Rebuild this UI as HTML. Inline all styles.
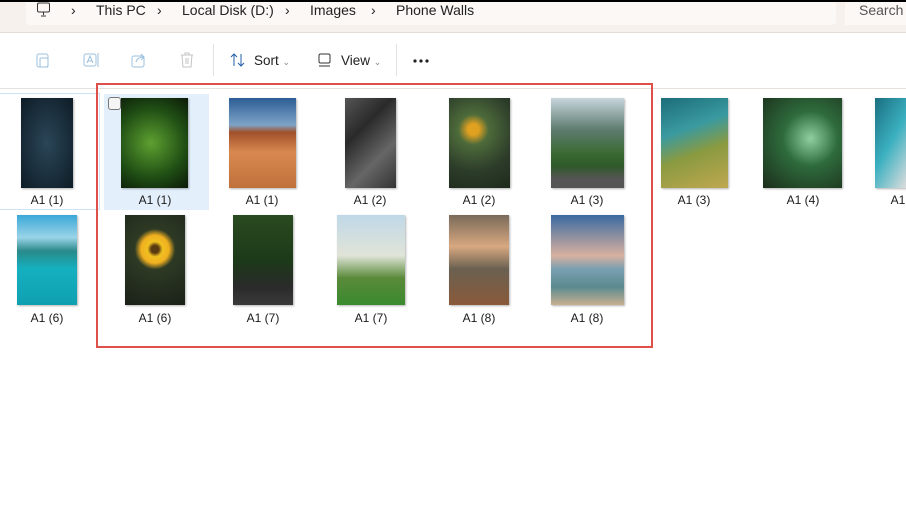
<!DOCTYPE html>
<html><head><style>
*{margin:0;padding:0;box-sizing:border-box}
body{width:906px;height:510px;overflow:hidden;background:#fff;font-family:"Liberation Sans",sans-serif;position:relative;color:#1a1a1a}
.a{position:absolute}
.t{position:absolute;box-shadow:1px 1px 2px rgba(0,0,0,.3)}
.l{position:absolute;font-size:12px;text-align:center;width:80px}
.tb{position:absolute;font-size:13px;color:#222}
</style></head><body>
<div class="a" style="left:0;top:0;width:906px;height:2px;background:#000"></div>
<div class="a" style="left:0;top:2px;width:906px;height:30px;background:#f6f1ec"></div>
<div class="a" style="left:26px;top:2px;width:810px;height:23px;background:#fbf8f5;border-radius:0 0 4px 4px"></div>
<div class="a" style="left:845px;top:2px;width:61px;height:23px;background:#fbf8f5"></div>
<div class="a" style="left:0;top:32px;width:906px;height:1px;background:#e4ddd6"></div>
<svg class="a" style="left:36px;top:2px" width="16" height="16"><rect x="1.5" y="1" width="12" height="9" rx="1.5" fill="none" stroke="#333"/><path d="M5 14h5M7.5 10v3" stroke="#333"/></svg>
<div class="tb" style="left:71px;top:2px;font-size:14px">›</div>
<div class="tb" style="left:96px;top:2px;font-size:14px">This PC</div>
<div class="tb" style="left:157px;top:2px;font-size:14px">›</div>
<div class="tb" style="left:182px;top:2px;font-size:14px">Local Disk (D:)</div>
<div class="tb" style="left:285px;top:2px;font-size:14px">›</div>
<div class="tb" style="left:310px;top:2px;font-size:14px">Images</div>
<div class="tb" style="left:371px;top:2px;font-size:14px">›</div>
<div class="tb" style="left:396px;top:2px;font-size:14px">Phone Walls</div>
<div class="tb" style="left:859px;top:2px;font-size:14px;color:#555">Search</div>
<svg class="a" style="left:34px;top:51px" width="18" height="18" stroke="#9cc0de" fill="none"><rect x="3" y="3" width="11" height="13" rx="2"/><rect x="6" y="7" width="8" height="9" rx="1"/></svg>
<svg class="a" style="left:82px;top:51px" width="18" height="18" stroke="#9cc0de" fill="none"><rect x="2" y="3" width="12" height="12" rx="2"/><path d="M5 12l3-7 3 7M6 10h4M16 2v14"/></svg>
<svg class="a" style="left:130px;top:51px" width="18" height="18" stroke="#9cc0de" fill="none"><rect x="2" y="5" width="12" height="11" rx="2"/><path d="M6 11c1-4 4-5 8-5M11 3l3 3-3 3"/></svg>
<svg class="a" style="left:178px;top:51px" width="18" height="18" stroke="#c4c4c4" fill="none"><path d="M3 4h12M7 4V2h4v2M4 4l1 12h8l1-12M8 7v6M10 7v6"/></svg>
<div class="a" style="left:213px;top:44px;width:1px;height:32px;background:#e2e2e2"></div>
<svg class="a" style="left:229px;top:51px" width="18" height="18" stroke="#1f5fa8" fill="none"><path d="M5 15V3M2 6l3-3 3 3M12 3v12M9 12l3 3 3-3"/></svg>
<div class="tb" style="left:254px;top:53px;font-size:13.5px">Sort <span style="font-size:9px;color:#888">⌄</span></div>
<svg class="a" style="left:317px;top:52px" width="16" height="16" stroke="#333" fill="none"><rect x="2" y="2" width="11" height="9" rx="1.5"/><path d="M2 14h11"/></svg>
<div class="tb" style="left:341px;top:53px;font-size:13.5px">View <span style="font-size:9px;color:#888">⌄</span></div>
<div class="a" style="left:396px;top:44px;width:1px;height:32px;background:#e2e2e2"></div>
<svg class="a" style="left:412px;top:58px" width="20" height="6" fill="#222"><circle cx="3" cy="3" r="1.6"/><circle cx="9" cy="3" r="1.6"/><circle cx="15" cy="3" r="1.6"/></svg>
<div class="a" style="left:0;top:88px;width:906px;height:1px;background:#e6e1dc"></div>
<div class="a" style="left:0;top:93px;width:100px;height:117px;border:1px solid #cde3f5;border-left:none"></div>
<div class="a" style="left:104px;top:94px;width:105px;height:116px;background:#e3f0fc"></div>
<div class="a" style="left:108px;top:97px;width:13px;height:13px;border:1px solid #777;border-radius:3px;background:#f5f5f5"></div>
<div class="t" style="left:21px;top:98px;width:52px;height:90px;background:radial-gradient(#2a4658,#0e1c26)"></div>
<div class="t" style="left:121px;top:98px;width:67px;height:90px;background:radial-gradient(circle at 45% 50%,#5da030,#1f4d14 60%,#0b1a08)"></div>
<div class="t" style="left:229px;top:98px;width:67px;height:90px;background:linear-gradient(#2d5d96,#7ea3c6 30%,#a0502a 38%,#d88850 60%,#c0703a)"></div>
<div class="t" style="left:345px;top:98px;width:51px;height:90px;background:linear-gradient(135deg,#555,#2a2a2a,#666,#333)"></div>
<div class="t" style="left:449px;top:98px;width:61px;height:90px;background:radial-gradient(circle at 40% 35%,#e0a020 8%,#4d6b3a 22%,#2d3d2a 60%,#1e2a1c)"></div>
<div class="t" style="left:551px;top:98px;width:73px;height:90px;background:linear-gradient(#c7d6dc,#5e7c70 35%,#3d6b35 60%,#2e5a28 75%,#555 90%)"></div>
<div class="t" style="left:661px;top:98px;width:67px;height:90px;background:linear-gradient(160deg,#1c6d79,#3a9aa0 35%,#8a9a40 60%,#c0a850)"></div>
<div class="t" style="left:763px;top:98px;width:79px;height:90px;background:radial-gradient(circle at 60% 45%,#8fd0a0,#2e6b3c 40%,#1b2d1a)"></div>
<div class="t" style="left:875px;top:98px;width:31px;height:90px;background:linear-gradient(120deg,#1a6f80,#3bb0c0,#ddd)"></div>
<div class="l" style="left:7px;top:193px">A1 (1)</div>
<div class="l" style="left:115px;top:193px">A1 (1)</div>
<div class="l" style="left:222px;top:193px">A1 (1)</div>
<div class="l" style="left:330px;top:193px">A1 (2)</div>
<div class="l" style="left:439px;top:193px">A1 (2)</div>
<div class="l" style="left:547px;top:193px">A1 (3)</div>
<div class="l" style="left:654px;top:193px">A1 (3)</div>
<div class="l" style="left:763px;top:193px">A1 (4)</div>
<div class="l" style="left:858px;top:193px">A1</div>
<div class="t" style="left:17px;top:215px;width:60px;height:90px;background:linear-gradient(#3aa8d8,#9ad4e8 25%,#2a8a8a 40%,#15b0c0 60%,#0fa0b0)"></div>
<div class="t" style="left:125px;top:215px;width:60px;height:90px;background:radial-gradient(circle at 50% 38%,#5a3a10 6%,#f0c020 12%,#f0b020 22%,#2e3a24 32%,#1a2018)"></div>
<div class="t" style="left:233px;top:215px;width:60px;height:90px;background:linear-gradient(#2a4a20,#1c3a18 50%,#2a2a2a 80%,#3a3a3a)"></div>
<div class="t" style="left:337px;top:215px;width:68px;height:90px;background:linear-gradient(#c0d8e8,#e0e4d8 45%,#5a8a3a 70%,#3a8a30)"></div>
<div class="t" style="left:449px;top:215px;width:60px;height:90px;background:linear-gradient(#7a6a5a,#d8a880 35%,#6a6050 60%,#8a5a3a)"></div>
<div class="t" style="left:551px;top:215px;width:73px;height:90px;background:linear-gradient(#3a6aa0,#d8b0a0 45%,#7aa0b0 60%,#5a8a90 80%,#c8b090)"></div>
<div class="l" style="left:7px;top:311px">A1 (6)</div>
<div class="l" style="left:115px;top:311px">A1 (6)</div>
<div class="l" style="left:223px;top:311px">A1 (7)</div>
<div class="l" style="left:331px;top:311px">A1 (7)</div>
<div class="l" style="left:439px;top:311px">A1 (8)</div>
<div class="l" style="left:547px;top:311px">A1 (8)</div>
<div class="a" style="left:96px;top:83px;width:557px;height:265px;border:2px solid #e0504a"></div>
</body></html>
